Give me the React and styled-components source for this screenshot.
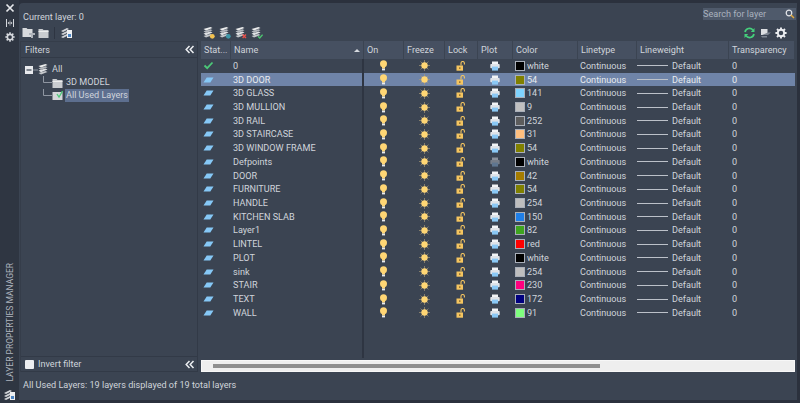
import React from "react";
import styled, { createGlobalStyle } from "styled-components";

const Global = createGlobalStyle`
  html, body { margin: 0; padding: 0; background: #2b313d; }
  * { box-sizing: border-box; }
  #root { width: 800px; height: 403px; overflow: hidden; }
`;

const COLS = "30px 133px 40px 41px 33px 35px 65px 59px 92px 66px";
const textColor = "#d0d4db";

const Frame = styled.div`
  width: 800px; height: 403px; display: flex;
  background: #2b313d; color: ${textColor};
  font: 9.1px/12px Roboto, "Open Sans", sans-serif;
`;
const SideStrip = styled.div`
  width: 19px; flex: none; display: flex; flex-direction: column; align-items: center;
  padding: 3px 0 2px; background: #2f3642;
`;
const StripTools = styled.div`
  display: flex; flex-direction: column; align-items: center; gap: 4.5px;
`;
const VerticalTitle = styled.div`
  margin-top: auto; margin-bottom: 6px; writing-mode: vertical-rl; transform: rotate(180deg);
  font-size: 8.5px; line-height: 12px; color: #aeb4be; white-space: nowrap;
`;
const Panel = styled.div`
  width: 778px; height: 397px; margin-top: 3px; background: #3b4452; flex: none;
  border-top-left-radius: 4px; display: flex; flex-direction: column; padding-left: 1px;
`;
const TopBar = styled.div`
  height: 23px; display: flex; align-items: flex-end; justify-content: space-between;
  padding: 0 1px 3px 3px;
`;
const CurrentLayer = styled.span``;
const SearchBox = styled.div`
  width: 93px; height: 12px; align-self: flex-start; margin-top: 5px;
  background: #4f5a6b; color: #aab2be; display: flex; align-items: center; justify-content: space-between;
  padding: 0 1px 0 0;
`;
const ToolRow = styled.div`
  height: 15px; display: flex; align-items: center; padding: 0 10px 2px 2px;
`;
const FilterTools = styled.div`
  width: 181px; display: flex; align-items: center; gap: 3px;
`;
const ToolSep = styled.span` width: 1px; height: 12px; background: #2e3542; margin: 0 2px; `;
const LayerTools = styled.div` display: flex; gap: 4px; `;
const RightTools = styled.div` margin-left: auto; display: flex; gap: 4px; align-items: center; `;
const Main = styled.div`
  height: 331px; display: flex;
`;
const FilterPanel = styled.div`
  width: 178px; flex: none; display: flex; flex-direction: column;
  border-right: 1px solid #323a47; border-left: 1px solid #353d4a;
`;
const FilterHead = styled.div`
  height: 17px; display: flex; align-items: center; justify-content: space-between;
  padding: 0 2px 0 4px; border-bottom: 1px solid #323a47; border-top: 1px solid #353d4a;
`;
const Tree = styled.div` flex: 1; padding: 5px 0 0 4px; `;
const TreeRow = styled.div`
  height: 13px; display: flex; align-items: center; padding-left: ${p => p.$indent || 0}px;
`;
const TreeLabel = styled.span`
  margin-left: ${p => p.$gap ?? 2}px; padding: 0 1px; background: ${p => p.$selected ? "#5d6f8f" : "transparent"};
  line-height: 13px;
`;
const FilterFoot = styled.div`
  height: 16px; display: flex; align-items: center; justify-content: space-between;
  padding: 0 2px 0 4px; border-top: 1px solid #323a47; border-bottom: 1px solid #323a47;
`;
const Invert = styled.label` display: flex; align-items: center; gap: 4px; `;
const Box = styled.span` width: 9px; height: 9px; background: #eceef0; border-radius: 1px; `;
const TableArea = styled.div`
  flex: none; width: 599px; display: flex; flex-direction: column; padding: 0 2px 0 3px;
`;
const HeadRow = styled.div`
  height: 18px; display: grid; grid-template-columns: ${COLS};
`;
const HeadCell = styled.div`
  background: #465061; margin-right: 1px; padding-left: 3px; display: flex; align-items: center; justify-content: space-between;
`;
const SortMark = styled.span`
  width: 0; height: 0; border: 3px solid transparent; border-bottom: 3px solid #d5d9df; border-top: 0; margin-right: 3px;
`;
const Body = styled.div`
  flex: 1; position: relative;
  &::after {
    content: ""; position: absolute; left: 161px; top: 0; bottom: 2px; width: 2px; background: #2e3542;
  }
`;
const Row = styled.div`
  height: 13.72px; display: grid; grid-template-columns: ${COLS}; align-items: center;
  background: ${p => p.$selected ? "#6f84a8" : "transparent"};
  color: ${p => p.$selected ? "#e8ebef" : textColor};
`;
const Cell = styled.div`
  padding-left: ${p => p.$pad ?? 3}px; white-space: nowrap; display: flex; align-items: center; height: 100%;
  ${p => p.$center ? "justify-content: center; padding: 0 1px 0 0;" : ""}
`;
const Swatch = styled.span`
  width: 10px; height: 10px; background: ${p => p.$c}; border: 1px solid #a9afb9; margin-right: 2px; flex: none;
`;
const LwLine = styled.span`
  width: 31px; height: 1px; background: #bcc1c9; margin-right: 4px; flex: none;
`;
const ScrollTrack = styled.div`
  height: 12px; background: #eeeeee; padding: 3px 0 0 11px; border: 1px solid #f7f7f7;
`;
const ScrollThumb = styled.div` width: 387px; height: 4px; background: #8e8e8e; `;
const StatusBar = styled.div`
  flex: 1; display: flex; align-items: center; padding: 0 0 2px 3px;
`;

const Svg = ({ w = 12, h = 12, children }) => (
  <svg width={w} height={h} viewBox={`0 0 ${w} ${h}`} style={{ display: "block", flex: "none" }}>{children}</svg>
);
const Stack = ({ c }) => (
  <>
    <path d="M0.5 9 7.5 7 9.5 8 3 10.6Z" fill="#c4c7cb" />
    <path d="M0.5 6.6 7.5 4.6 9.5 5.6 3 8.2Z" fill="#e0e2e4" />
    <path d="M0.5 4.3 7.5 2.3 9.5 3.3 3 5.9Z" fill="#b4b8bd" />
    <path d="M0.5 2 7.5 0 9.5 1 3 3.6Z" fill="#eceded" />
    {c}
  </>
);
const LayerNew = () => <Svg><Stack c={<circle cx="9.3" cy="9.3" r="2.4" fill="#f2c14f" />} /></Svg>;
const LayerVp = () => <Svg><Stack c={<circle cx="9.3" cy="9.3" r="2.4" fill="#3f97a8" />} /></Svg>;
const LayerDel = () => <Svg><Stack c={<path d="M7.6 7.6 11 11M11 7.6 7.6 11" stroke="#e8504a" strokeWidth="1.4" />} /></Svg>;
const LayerOk = () => <Svg><Stack c={<path d="M7 9.3 8.7 11 11.6 7.6" stroke="#4cc36f" strokeWidth="1.4" fill="none" />} /></Svg>;

const Folder = ({ w = 11 }) => (
  <Svg w={w} h={10}>
    <path d="M.5 2V1h4l1 1h5v8H.5Z" fill="#c9ccd0" />
    <path d="M.5 3h10v1H.5Z" fill="#eceded" />
  </Svg>
);
const FolderStar = () => (
  <Svg w={13} h={12}>
    <path d="M.5 2V1h4l1 1h5v8H.5Z" fill="#d8dadd" />
    <path d="M7 6h6v2H11v3H9V8H7Z" fill="#aeb3ba" />
  </Svg>
);
const States = () => (
  <Svg w={13} h={13}>
    <path d="M1 5 7 2l2 1-6 3ZM1 8l6-3 2 1-6 3ZM1 11l6-3 2 1-6 3Z" fill="#d2d4d8" />
    <rect x="7" y="4" width="5" height="8" fill="#eef0f2" />
    <rect x="8" y="8" width="3" height="3" fill="#4d86c4" />
  </Svg>
);
const Collapse = () => (
  <Svg w={10} h={9}>
    <path d="M4.5 1 1.2 4.5 4.5 8M8.5 1 5.2 4.5 8.5 8" fill="none" stroke="#eceef1" strokeWidth="1.5" />
  </Svg>
);
const Close = () => <Svg w={10} h={10}><path d="M1.5 1.5 8.5 8.5M8.5 1.5 1.5 8.5" stroke="#e6e8ec" strokeWidth="1.7" /></Svg>;
const AutoHide = () => <Svg w={10} h={10}><path d="M1.5 1v8M8.5 1v8" stroke="#d5d8dd" strokeWidth="1" /><path d="M2.5 5 5.5 2.6v4.8ZM7.5 5 4.5 2.6v4.8Z" fill="#d5d8dd" /></Svg>;
const Gear = ({ s = 10, c = "#d5d8dd" }) => (
  <svg width={s} height={s} viewBox="0 0 12 12" style={{ display: "block", flex: "none" }}>
    <circle cx="6" cy="6" r="3.2" fill="none" stroke={c} strokeWidth="1.9" />
    <path d="M6 .4v2.2M6 9.4v2.2M.4 6h2.2M9.4 6h2.2M2 2l1.6 1.6M8.4 8.4 10 10M10 2 8.4 3.6M3.6 8.4 2 10" stroke={c} strokeWidth="1.9" />
  </svg>
);
const Magnifier = () => <Svg w={10} h={10}><circle cx="4" cy="4" r="2.8" fill="none" stroke="#e4e6ea" strokeWidth="1.2" /><path d="M6 6 9 9" stroke="#e0a93f" strokeWidth="1.5" /></Svg>;
const Refresh = () => (
  <Svg w={13} h={12}>
    <path d="M2 5A4.5 4.5 0 0 1 10 3.2" fill="none" stroke="#45d07c" strokeWidth="1.7" />
    <path d="M11.5 1v4H7.8Z" fill="#45d07c" />
    <path d="M11 7A4.5 4.5 0 0 1 3 8.8" fill="none" stroke="#45d07c" strokeWidth="1.7" />
    <path d="M1.5 11V7h3.7Z" fill="#45d07c" />
  </Svg>
);
const Settings = () => (
  <Svg w={11} h={10}>
    <path d="M1 1h6.5v6H1Z" fill="#dcdee1" />
    <path d="M2 7h6l3-2.5H8Z" fill="#7c8490" />
    <path d="M1 8h6v1.5H2Z" fill="#7c8490" />
  </Svg>
);
const Minus = () => (
  <Svg w={8} h={8}><rect width="8" height="8" fill="#e8eaed" /><rect x="1.5" y="3.4" width="5" height="1.2" fill="#3b4452" /></Svg>
);
const TreeConn = () => <Svg w={9} h={13}><path d="M.5 0v6.5H9" fill="none" stroke="#8f96a1" /></Svg>;
const StatusCheck = () => <Svg w={11} h={9}><path d="M1.5 4.5 4.2 7.2 9.5 1.5" fill="none" stroke="#4cc878" strokeWidth="1.8" /></Svg>;
const StatusLayer = () => <Svg w={11} h={6}><path d="M0.5 5.5 3.7 .5H10.5L7.3 5.5Z" fill="#86c8f6" /></Svg>;
const Bulb = () => (
  <Svg w={9} h={11}>
    <circle cx="4.5" cy="3.8" r="3.5" fill="#ffd674" />
    <rect x="3" y="7" width="3" height="1.6" fill="#ffd674" />
    <rect x="3" y="8.6" width="3" height="1.8" fill="#e8ebef" />
  </Svg>
);
const Sun = () => (
  <Svg w={11} h={11}>
    <path d="M5.5 0v11M0 5.5h11M1.6 1.6l7.8 7.8M9.4 1.6l-7.8 7.8" stroke="#a89a78" strokeWidth=".7" />
    <circle cx="5.5" cy="5.5" r="3.2" fill="#ffd674" />
  </Svg>
);
const Lock = () => (
  <Svg w={10} h={10}>
    <rect x="0.5" y="4.5" width="6.5" height="5.2" fill="#f5c560" />
    <rect x="3" y="6.3" width="1.5" height="1.6" fill="#8d6f35" />
    <path d="M5 4.5V2.2A1.7 1.7 0 0 1 8.4 2.2V3.6" fill="none" stroke="#f5c560" strokeWidth="1.1" />
  </Svg>
);
const Printer = ({ off }) => (
  <Svg w={10} h={10}>
    <rect x="2" y="0.5" width="6" height="3" fill={off ? "#8a909a" : "#f2f4f6"} />
    <rect x="0.3" y="3" width="9.4" height="4.3" rx=".8" fill={off ? "#767d88" : "#dfe3e8"} />
    <rect x="2" y="5.6" width="6" height="4" fill={off ? "#5f7690" : "#8ac8f5"} />
  </Svg>
);

const layers = [
  ["0", "#000000", "white", "check"],
  ["3D DOOR", "#808000", "54"],
  ["3D GLASS", "#7fd4ff", "141"],
  ["3D MULLION", "#c0c0c0", "9"],
  ["3D RAIL", "#5c5c5c", "252"],
  ["3D STAIRCASE", "#ffbf7f", "31"],
  ["3D WINDOW FRAME", "#808000", "54"],
  ["Defpoints", "#000000", "white"],
  ["DOOR", "#a57c00", "42"],
  ["FURNITURE", "#808000", "54"],
  ["HANDLE", "#bebebe", "254"],
  ["KITCHEN SLAB", "#1f7fe8", "150"],
  ["Layer1", "#3fa51f", "82"],
  ["LINTEL", "#ff0000", "red"],
  ["PLOT", "#000000", "white"],
  ["sink", "#bebebe", "254"],
  ["STAIR", "#ff007f", "230"],
  ["TEXT", "#00007f", "172"],
  ["WALL", "#7fff7f", "91"],
];
const heads = ["Stat...", "Name", "On", "Freeze", "Lock", "Plot", "Color", "Linetype", "Lineweight", "Transparency"];

export default function App() {
  return (
    <Frame>
      <Global />
      <SideStrip>
        <StripTools>
          <Close />
          <AutoHide />
          <Gear />
        </StripTools>
        <VerticalTitle>LAYER PROPERTIES MANAGER</VerticalTitle>
        <States />
      </SideStrip>
      <Panel>
        <TopBar>
          <CurrentLayer>Current layer: 0</CurrentLayer>
          <SearchBox>Search for layer<Magnifier /></SearchBox>
        </TopBar>
        <ToolRow>
          <FilterTools>
            <FolderStar />
            <Folder />
            <ToolSep />
            <States />
          </FilterTools>
          <LayerTools>
            <LayerNew /><LayerVp /><LayerDel /><LayerOk />
          </LayerTools>
          <RightTools>
            <Refresh /><Settings /><Gear s={12} c="#eceef1" />
          </RightTools>
        </ToolRow>
        <Main>
          <FilterPanel>
            <FilterHead>Filters<Collapse /></FilterHead>
            <Tree>
              <TreeRow>
                <Minus />
                <Svg w={5} h={8}><path d="M0 4h5" stroke="#8f96a1" /></Svg>
                <Svg w={12} h={12}><Stack /></Svg>
                <TreeLabel $gap={1}>All</TreeLabel>
              </TreeRow>
              <TreeRow $indent={18}>
                <TreeConn />
                <Folder />
                <TreeLabel>3D MODEL</TreeLabel>
              </TreeRow>
              <TreeRow $indent={18}>
                <TreeConn />
                <Svg w={11} h={11}><path d="M.5 2h10v8H.5Z" fill="#d4d6d9" /><path d="M5 4 7 7 10.5 1" stroke="#4cc878" strokeWidth="1.3" fill="none" /></Svg>
                <TreeLabel $selected>All Used Layers</TreeLabel>
              </TreeRow>
            </Tree>
            <FilterFoot>
              <Invert><Box />Invert filter</Invert>
              <Collapse />
            </FilterFoot>
          </FilterPanel>
          <TableArea>
            <HeadRow>
              {heads.map(h => (
                <HeadCell key={h}>{h}{h === "Name" && <SortMark />}</HeadCell>
              ))}
            </HeadRow>
            <Body>
              {layers.map(([name, col, label, st], i) => (
                <Row key={name} $selected={i === 1}>
                  <Cell $pad={2}>{st === "check" ? <StatusCheck /> : <StatusLayer />}</Cell>
                  <Cell $pad={2}>{name}</Cell>
                  <Cell $center><Bulb /></Cell>
                  <Cell $center><Sun /></Cell>
                  <Cell $center><Lock /></Cell>
                  <Cell $center><Printer off={name === "Defpoints"} /></Cell>
                  <Cell $pad={2}><Swatch $c={col} />{label}</Cell>
                  <Cell $pad={2}>Continuous</Cell>
                  <Cell $pad={0}><LwLine />Default</Cell>
                  <Cell $pad={3}>0</Cell>
                </Row>
              ))}
            </Body>
            <ScrollTrack><ScrollThumb /></ScrollTrack>
          </TableArea>
        </Main>
        <StatusBar>All Used Layers: 19 layers displayed of 19 total layers</StatusBar>
      </Panel>
    </Frame>
  );
}
